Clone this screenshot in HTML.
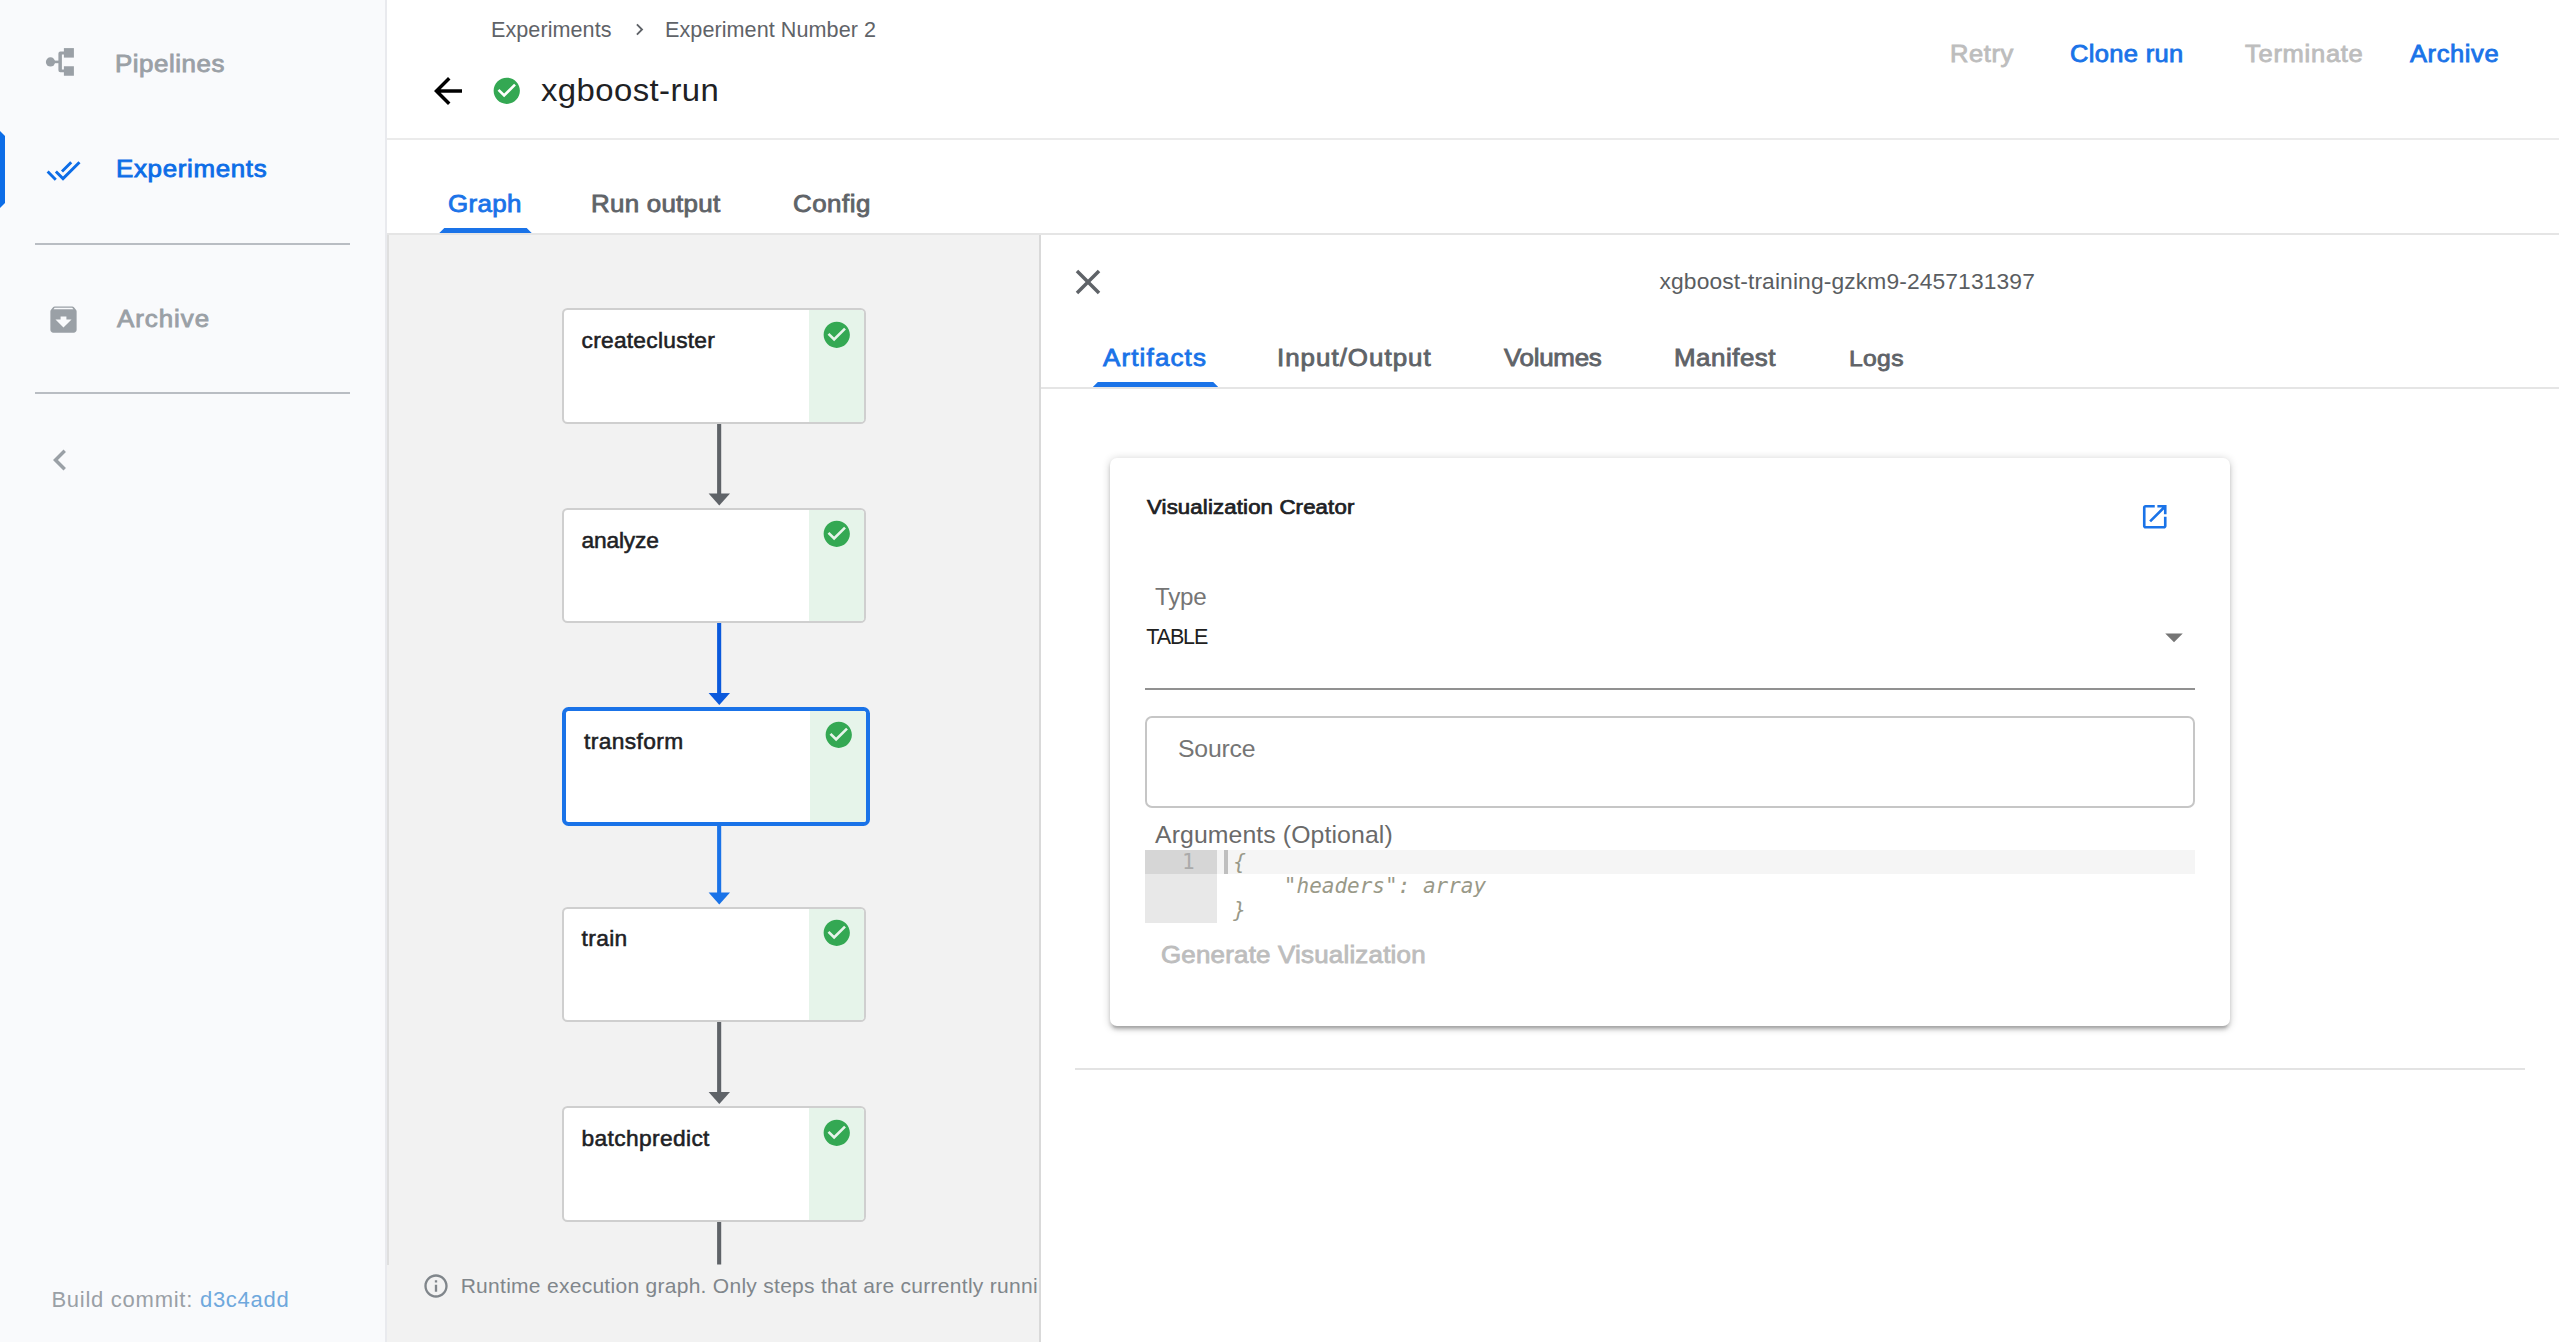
<!DOCTYPE html>
<html lang="en"><head><meta charset="utf-8"><title>Kubeflow Pipelines - xgboost-run</title>
<style>
html,body{margin:0;padding:0}
html{overflow:hidden;width:2559px;height:1342px}
body{width:2559px;height:1342px;position:relative;overflow:hidden;background:#fff;font-family:'Liberation Sans',sans-serif}
.t{position:absolute;white-space:pre;display:block}
.ic{position:absolute;display:block;overflow:visible}
.abs{position:absolute}
#side{left:0;top:0;width:385px;height:1342px;background:#f9fafc}
#sideb{left:385px;top:0;width:2px;height:1342px;background:#e9eaee}
.hr{position:absolute;left:35.2px;width:314.8px;height:2.2px;background:#b9bdc3}
#act{left:0;top:131px;width:0;height:67px;border-left:5.25px solid #0d6de7;border-top:5.25px solid transparent;border-bottom:5.25px solid transparent}
#tbline{left:387px;top:138px;width:2172px;height:2px;background:#ebebeb}
#tabline{left:387px;top:233px;width:2172px;height:2px;background:#e5e5e5}
.ind{position:absolute;height:5.25px;background:#1a73e8;clip-path:polygon(5.25px 0,calc(100% - 5.25px) 0,100% 100%,0 100%)}
#graph{left:387px;top:235px;width:653px;height:1107px;background:#f2f2f2;overflow:hidden}
#gl{left:387px;top:235px;width:2px;height:1029.5px;background:#dfdfdf}
.node{position:absolute;box-sizing:border-box;width:303.6px;height:115.5px;background:#fff;border:2px solid #cfcfcf;border-radius:5.5px;overflow:hidden}
.node .st{position:absolute;right:0;top:0;bottom:0;width:55.3px;background:#e6f4ea}
.node.sel{width:307.6px;height:119px;border:4px solid #1a73e8;border-radius:6.5px}
.node.sel .st{width:56.2px}
#panel{left:1041px;top:235px;width:1518px;height:1107px;background:#fff}
#pl{left:1039px;top:235px;width:2px;height:1107px;background:#d9d9d9}
#ptabline{left:1041px;top:387px;width:1518px;height:2px;background:#e5e5e5}
#card{left:1110px;top:458.3px;width:1119.6px;height:567.3px;background:#fff;border-radius:7px;box-shadow:0 1.75px 8.75px 0 rgba(0,0,0,.2),0 3.5px 3.5px 0 rgba(0,0,0,.14),0 5.25px 1.75px -3.5px rgba(0,0,0,.12)}
#uline{left:1145px;top:688px;width:1049.5px;height:2px;background:#919191}
#srcbox{left:1145px;top:716px;width:1050px;height:91.6px;box-sizing:border-box;border:2px solid #c6c6c6;border-radius:7px}
#ed{left:1145px;top:850px;width:1050px;height:72.5px;background:#fff}
#edg{left:1145px;top:850px;width:71.8px;height:72.5px;background:#e8e8e8}
#edal{left:1216.8px;top:850px;width:978.2px;height:23.9px;background:#f5f5f5}
#edga{left:1145px;top:850px;width:71.8px;height:23.9px;background:#d6d6d6}
#cur{left:1224px;top:850px;width:3.6px;height:23.9px;background:#bfbfbf}
.code{position:absolute;white-space:pre;font:italic 21px/24.17px 'DejaVu Sans Mono','Liberation Mono',monospace;color:#999988}
#hr2{left:1075px;top:1068px;width:1450px;height:2px;background:#e3e3e3}
#foot{left:389.4px;top:1264.5px;width:647.4px;height:77.5px;overflow:hidden}
</style></head>
<body>
<nav id="sidenav">
<div id="side" class="abs"></div><div id="sideb" class="abs"></div>
<div id="act" class="abs"></div>
<svg class="ic" style="left:44px;top:44px" width="36" height="36" viewBox="44 44 36 36"><circle cx="50.5" cy="61.9" r="4.6" fill="#9aa0a6"/><rect x="54" y="60.6" width="5" height="2.6" fill="#9aa0a6"/><path d="M64 51.6H60.4a2 2 0 0 0-2 2V70.2a2 2 0 0 0 2 2H64V69.4H61.9V54.6H64Z" fill="#9aa0a6"/><rect x="63.9" y="48.1" width="10" height="9.5" fill="#9aa0a6"/><rect x="63.9" y="66.25" width="10" height="9.5" fill="#9aa0a6"/></svg>
<svg class="ic" style="left:46.15px;top:152.65px" width="35" height="35" viewBox="0 0 24 24"><path fill="#0d6de7" d="M18 7l-1.41-1.41-6.34 6.34 1.41 1.41L18 7zm4.24-1.41L11.66 16.17 7.48 12l-1.41 1.41L11.66 19l12-12-1.42-1.41zM.41 13.41L6 19l1.41-1.41L1.83 12 .41 13.41z"/></svg>
<svg class="ic" style="left:46.00px;top:302.00px" width="35" height="35" viewBox="0 0 24 24"><path fill="#9aa0a6" d="M20.54 5.23l-1.39-1.68C18.88 3.21 18.47 3 18 3H6c-.47 0-.88.21-1.16.55L3.46 5.23C3.17 5.57 3 6.02 3 6.5V19c0 1.1.9 2 2 2h14c1.1 0 2-.9 2-2V6.5c0-.48-.17-.93-.46-1.27zM12 17.5L6.5 12H10v-2h4v2h3.5L12 17.5zM5.12 5l.81-1h12l.94 1H5.12z"/></svg>
<svg class="ic" style="left:39.20px;top:439.30px" width="42" height="42" viewBox="0 0 24 24"><path fill="#9aa0a6" d="M15.41 7.41L14 6l-6 6 6 6 1.41-1.41L10.83 12z"/></svg>
<div class="hr" style="top:242.8px"></div><div class="hr" style="top:391.8px"></div>
<span id="sb1" class="t" style="left:115.20px;top:52.00px;font:normal 400 23.99px/23.99px 'Liberation Sans', sans-serif;color:#9aa0a6;letter-spacing:0.500px;-webkit-text-stroke:0.84px #9aa0a6;transform:scaleX(1.08);transform-origin:0 0;">Pipelines</span>
<span id="sb2" class="t" style="left:115.80px;top:157.00px;font:normal 400 23.99px/23.99px 'Liberation Sans', sans-serif;color:#0d6de7;letter-spacing:0.620px;-webkit-text-stroke:0.84px #0d6de7;transform:scaleX(1.08);transform-origin:0 0;">Experiments</span>
<span id="sb3" class="t" style="left:117.40px;top:307.00px;font:normal 400 23.99px/23.99px 'Liberation Sans', sans-serif;color:#9aa0a6;letter-spacing:0.883px;-webkit-text-stroke:0.84px #9aa0a6;transform:scaleX(1.08);transform-origin:0 0;">Archive</span>
<span id="build" class="t" style="left:51.40px;top:1289.00px;font:400 22px/22px 'Liberation Sans', sans-serif;color:#9aa0a6;letter-spacing:0.740px">Build commit: <span style="color:#6fa8dc">d3c4add</span></span>
</nav>
<header id="toolbar">
<span id="bc1" class="t" style="left:491.00px;top:19.00px;font:normal 400 21.6px/21.6px 'Liberation Sans', sans-serif;color:#5f6368;letter-spacing:0.050px;">Experiments</span>
<svg class="ic" style="left:627.60px;top:17.80px" width="23" height="23" viewBox="0 0 24 24"><path fill="#5f6368" d="M10 6L8.59 7.41 13.17 12l-4.58 4.59L10 18l6-6z"/></svg>
<span id="bc2" class="t" style="left:665.00px;top:19.00px;font:normal 400 21.6px/21.6px 'Liberation Sans', sans-serif;color:#5f6368;letter-spacing:0.056px;">Experiment Number 2</span>
<svg class="ic" style="left:427.30px;top:69.75px" width="42" height="42" viewBox="0 0 24 24"><path fill="#000" d="M20 11H7.83l5.59-5.59L12 4l-8 8 8 8 1.41-1.41L7.83 13H20v-2z"/></svg>
<svg class="ic" style="left:491.25px;top:74.75px" width="31.50" height="31.50" viewBox="0 0 24 24"><path fill="#34a853" d="M12 2C6.48 2 2 6.48 2 12s4.48 10 10 10 10-4.48 10-10S17.52 2 12 2zm-2 15l-5-5 1.41-1.41L10 14.17l7.59-7.59L19 8l-9 9z"/></svg>
<span id="title" class="t" style="left:541.00px;top:75.00px;font:normal 400 31px/31px 'Liberation Sans', sans-serif;color:#202124;letter-spacing:0.400px;transform:scaleX(1.06);transform-origin:0 0;">xgboost-run</span>
<span id="b1" class="t" style="left:1950.00px;top:43.00px;font:normal 400 23.61px/23.61px 'Liberation Sans', sans-serif;color:#bdbdbd;letter-spacing:0.550px;-webkit-text-stroke:0.83px #bdbdbd;transform:scaleX(1.08);transform-origin:0 0;">Retry</span>
<span id="b2" class="t" style="left:2070.00px;top:43.00px;font:normal 400 23.61px/23.61px 'Liberation Sans', sans-serif;color:#1a73e8;letter-spacing:0.300px;-webkit-text-stroke:0.83px #1a73e8;transform:scaleX(1.08);transform-origin:0 0;">Clone run</span>
<span id="b3" class="t" style="left:2245.25px;top:43.00px;font:normal 400 23.61px/23.61px 'Liberation Sans', sans-serif;color:#bdbdbd;letter-spacing:0.675px;-webkit-text-stroke:0.83px #bdbdbd;transform:scaleX(1.08);transform-origin:0 0;">Terminate</span>
<span id="b4" class="t" style="left:2409.50px;top:43.00px;font:normal 400 23.61px/23.61px 'Liberation Sans', sans-serif;color:#1a73e8;letter-spacing:0.550px;-webkit-text-stroke:0.83px #1a73e8;transform:scaleX(1.08);transform-origin:0 0;">Archive</span>
<div id="tbline" class="abs"></div><div id="tabline" class="abs"></div>
<span id="tab1" class="t" style="left:447.50px;top:192.00px;font:normal 400 23.99px/23.99px 'Liberation Sans', sans-serif;color:#1a73e8;letter-spacing:0.300px;-webkit-text-stroke:0.84px #1a73e8;transform:scaleX(1.08);transform-origin:0 0;">Graph</span>
<span id="tab2" class="t" style="left:591.00px;top:192.00px;font:normal 400 23.99px/23.99px 'Liberation Sans', sans-serif;color:#5f6368;letter-spacing:0.244px;-webkit-text-stroke:0.84px #5f6368;transform:scaleX(1.08);transform-origin:0 0;">Run output</span>
<span id="tab3" class="t" style="left:792.50px;top:192.00px;font:normal 400 23.99px/23.99px 'Liberation Sans', sans-serif;color:#5f6368;letter-spacing:0.450px;-webkit-text-stroke:0.84px #5f6368;transform:scaleX(1.08);transform-origin:0 0;">Config</span>
<div class="ind" style="left:439.3px;top:227.75px;width:92.4px"></div>
</header>
<main id="graphpane">
<div id="graph" class="abs"></div><div id="gl" class="abs"></div>
<svg class="ic" style="left:388px;top:235px" width="652" height="1107" viewBox="388 235 652 1107">
<rect x="717.1" y="423.3" width="4.1" height="70.70" fill="#5f6368"/>
<path d="M708.6 493.5H730.0L719.3 505.6Z" fill="#5f6368"/>
<rect x="717.1" y="622.5" width="4.1" height="71.00" fill="#0b59dc"/>
<path d="M708.6 693H730.0L719.3 705Z" fill="#0b59dc"/>
<rect x="717.1" y="826" width="4.1" height="67.00" fill="#1a73e8"/>
<path d="M708.6 892.5H730.0L719.3 904.6Z" fill="#1a73e8"/>
<rect x="717.1" y="1021.5" width="4.1" height="71.00" fill="#5f6368"/>
<path d="M708.6 1092H730.0L719.3 1104Z" fill="#5f6368"/>
<rect x="717.1" y="1221.5" width="4.1" height="43" fill="#5f6368"/>
</svg>
<div class="node" style="left:562.4px;top:308.10px"><div class="st"></div></div>
<svg class="ic" style="left:820.75px;top:318.65px" width="31.50" height="31.50" viewBox="0 0 24 24"><path fill="#34a853" d="M12 2C6.48 2 2 6.48 2 12s4.48 10 10 10 10-4.48 10-10S17.52 2 12 2zm-2 15l-5-5 1.41-1.41L10 14.17l7.59-7.59L19 8l-9 9z"/></svg>
<div class="node" style="left:562.4px;top:507.60px"><div class="st"></div></div>
<svg class="ic" style="left:820.75px;top:518.15px" width="31.50" height="31.50" viewBox="0 0 24 24"><path fill="#34a853" d="M12 2C6.48 2 2 6.48 2 12s4.48 10 10 10 10-4.48 10-10S17.52 2 12 2zm-2 15l-5-5 1.41-1.41L10 14.17l7.59-7.59L19 8l-9 9z"/></svg>
<div class="node sel" style="left:562.3px;top:707.00px"><div class="st"></div></div>
<svg class="ic" style="left:822.85px;top:719.25px" width="31.50" height="31.50" viewBox="0 0 24 24"><path fill="#34a853" d="M12 2C6.48 2 2 6.48 2 12s4.48 10 10 10 10-4.48 10-10S17.52 2 12 2zm-2 15l-5-5 1.41-1.41L10 14.17l7.59-7.59L19 8l-9 9z"/></svg>
<div class="node" style="left:562.4px;top:906.60px"><div class="st"></div></div>
<svg class="ic" style="left:820.75px;top:917.15px" width="31.50" height="31.50" viewBox="0 0 24 24"><path fill="#34a853" d="M12 2C6.48 2 2 6.48 2 12s4.48 10 10 10 10-4.48 10-10S17.52 2 12 2zm-2 15l-5-5 1.41-1.41L10 14.17l7.59-7.59L19 8l-9 9z"/></svg>
<div class="node" style="left:562.4px;top:1106.10px"><div class="st"></div></div>
<svg class="ic" style="left:820.75px;top:1116.65px" width="31.50" height="31.50" viewBox="0 0 24 24"><path fill="#34a853" d="M12 2C6.48 2 2 6.48 2 12s4.48 10 10 10 10-4.48 10-10S17.52 2 12 2zm-2 15l-5-5 1.41-1.41L10 14.17l7.59-7.59L19 8l-9 9z"/></svg>
<span id="n1" class="t" style="left:581.50px;top:329.00px;font:normal 400 22.75px/22.75px 'Liberation Sans', sans-serif;color:#202124;letter-spacing:0.258px;-webkit-text-stroke:0.55px #202124;">createcluster</span>
<span id="n2" class="t" style="left:581.50px;top:529.00px;font:normal 400 22.75px/22.75px 'Liberation Sans', sans-serif;color:#202124;letter-spacing:-0.183px;-webkit-text-stroke:0.55px #202124;">analyze</span>
<span id="n3" class="t" style="left:584.00px;top:730.00px;font:normal 400 22.75px/22.75px 'Liberation Sans', sans-serif;color:#202124;letter-spacing:0.375px;-webkit-text-stroke:0.55px #202124;">transform</span>
<span id="n4" class="t" style="left:581.50px;top:927.00px;font:normal 400 22.75px/22.75px 'Liberation Sans', sans-serif;color:#202124;letter-spacing:0.375px;-webkit-text-stroke:0.55px #202124;">train</span>
<span id="n5" class="t" style="left:581.50px;top:1127.00px;font:normal 400 22.75px/22.75px 'Liberation Sans', sans-serif;color:#202124;letter-spacing:0.364px;-webkit-text-stroke:0.55px #202124;">batchpredict</span>
<svg class="ic" style="left:422.00px;top:1272.00px" width="28" height="28" viewBox="0 0 24 24"><path fill="#80868b" d="M11 17h2v-6h-2v6zm1-15C6.48 2 2 6.48 2 12s4.48 10 10 10 10-4.48 10-10S17.52 2 12 2zm0 18c-4.41 0-8-3.59-8-8s3.59-8 8-8 8 3.59 8 8-3.59 8-8 8zM11 9h2V7h-2v2z"/></svg>
<div id="foot" class="abs"><span id="foot_t" class="t" style="left:71.25px;top:10.50px;font:400 21px/21px 'Liberation Sans', sans-serif;color:#80868b;letter-spacing:0.282px">Runtime execution graph. Only steps that are currently running or have already completed are shown.</span></div>
</main>
<aside id="sidepanel">
<div id="panel" class="abs"></div><div id="pl" class="abs"></div><div id="ptabline" class="abs"></div>
<svg class="ic" style="left:1067.10px;top:260.90px" width="42" height="42" viewBox="0 0 24 24"><path fill="#5f6368" d="M19 6.41L17.59 5 12 10.59 6.41 5 5 6.41 10.59 12 5 17.59 6.41 19 12 13.41 17.59 19 19 17.59 13.41 12z"/></svg>
<span id="ptitle" class="t" style="left:1659.50px;top:270.00px;font:normal 400 22.8px/22.8px 'Liberation Sans', sans-serif;color:#5a5d61;letter-spacing:0.125px;">xgboost-training-gzkm9-2457131397</span>
<span id="pt1" class="t" style="left:1102.50px;top:346.00px;font:normal 400 23.99px/23.99px 'Liberation Sans', sans-serif;color:#1a73e8;letter-spacing:1.081px;-webkit-text-stroke:0.84px #1a73e8;transform:scaleX(1.08);transform-origin:0 0;">Artifacts</span>
<span id="pt2" class="t" style="left:1277.00px;top:346.00px;font:normal 400 23.99px/23.99px 'Liberation Sans', sans-serif;color:#5f6368;letter-spacing:0.936px;-webkit-text-stroke:0.84px #5f6368;transform:scaleX(1.08);transform-origin:0 0;">Input/Output</span>
<span id="pt3" class="t" style="left:1503.75px;top:346.00px;font:normal 400 23.99px/23.99px 'Liberation Sans', sans-serif;color:#5f6368;letter-spacing:-0.242px;-webkit-text-stroke:0.84px #5f6368;transform:scaleX(1.08);transform-origin:0 0;">Volumes</span>
<span id="pt4" class="t" style="left:1674.00px;top:346.00px;font:normal 400 23.99px/23.99px 'Liberation Sans', sans-serif;color:#5f6368;letter-spacing:0.479px;-webkit-text-stroke:0.84px #5f6368;transform:scaleX(1.08);transform-origin:0 0;">Manifest</span>
<span id="pt5" class="t" style="left:1849.00px;top:347.00px;font:normal 400 22.85px/22.85px 'Liberation Sans', sans-serif;color:#5f6368;letter-spacing:0.300px;-webkit-text-stroke:0.80px #5f6368;transform:scaleX(1.08);transform-origin:0 0;">Logs</span>
<div class="ind" style="left:1092.8px;top:381.75px;width:125.4px"></div>
<section id="viscreator">
<div id="card" class="abs"></div>
<span id="vc" class="t" style="left:1146.50px;top:497.00px;font:normal 400 20.56px/20.56px 'Liberation Sans', sans-serif;color:#202124;letter-spacing:0.137px;-webkit-text-stroke:0.72px #202124;transform:scaleX(1.08);transform-origin:0 0;">Visualization Creator</span>
<svg class="ic" style="left:2139.40px;top:500.60px" width="31.5" height="31.5" viewBox="0 0 24 24"><path fill="#1a73e8" d="M19 19H5V5h7V3H5c-1.11 0-2 .9-2 2v14c0 1.1.89 2 2 2h14c1.1 0 2-.9 2-2v-7h-2v7zM14 3v2h3.59l-9.83 9.83 1.41 1.41L19 6.41V10h2V3h-7z"/></svg>
<span id="type" class="t" style="left:1155.00px;top:585.00px;font:normal 400 24.2px/24.2px 'Liberation Sans', sans-serif;color:#757575;letter-spacing:-0.250px;">Type</span>
<span id="table" class="t" style="left:1146.25px;top:627.00px;font:normal 400 21.5px/21.5px 'Liberation Sans', sans-serif;color:#212121;letter-spacing:-1.125px;">TABLE</span>
<svg class="ic" style="left:2153.00px;top:615.50px" width="42" height="42" viewBox="0 0 24 24"><path fill="#757575" d="M7 10l5 5 5-5z"/></svg>
<div id="uline" class="abs"></div><div id="srcbox" class="abs"></div>
<span id="source" class="t" style="left:1178.00px;top:737.00px;font:normal 400 24.8px/24.8px 'Liberation Sans', sans-serif;color:#757575;letter-spacing:-0.200px;">Source</span>
<span id="args" class="t" style="left:1155.00px;top:823.00px;font:normal 400 24.8px/24.8px 'Liberation Sans', sans-serif;color:#6a6a6a;letter-spacing:0.105px;">Arguments (Optional)</span>
<div id="ed" class="abs"></div><div id="edg" class="abs"></div><div id="edal" class="abs"></div><div id="edga" class="abs"></div><div id="cur" class="abs"></div>
<span id="ln" class="t" style="left:1182.1px;top:849.8px;font:400 21px/24.17px 'DejaVu Sans Mono', 'Liberation Mono', monospace;color:#aaaaaa">1</span>
<div id="code" class="code" style="left:1233.3px;top:850px">{
    "headers": array
}</div>
<span id="gen" class="t" style="left:1160.50px;top:943.00px;font:normal 400 23.99px/23.99px 'Liberation Sans', sans-serif;color:#bdbdbd;letter-spacing:0.193px;-webkit-text-stroke:0.84px #bdbdbd;transform:scaleX(1.08);transform-origin:0 0;">Generate Visualization</span>
</section>
<div id="hr2" class="abs"></div>
</aside>
</body></html>
